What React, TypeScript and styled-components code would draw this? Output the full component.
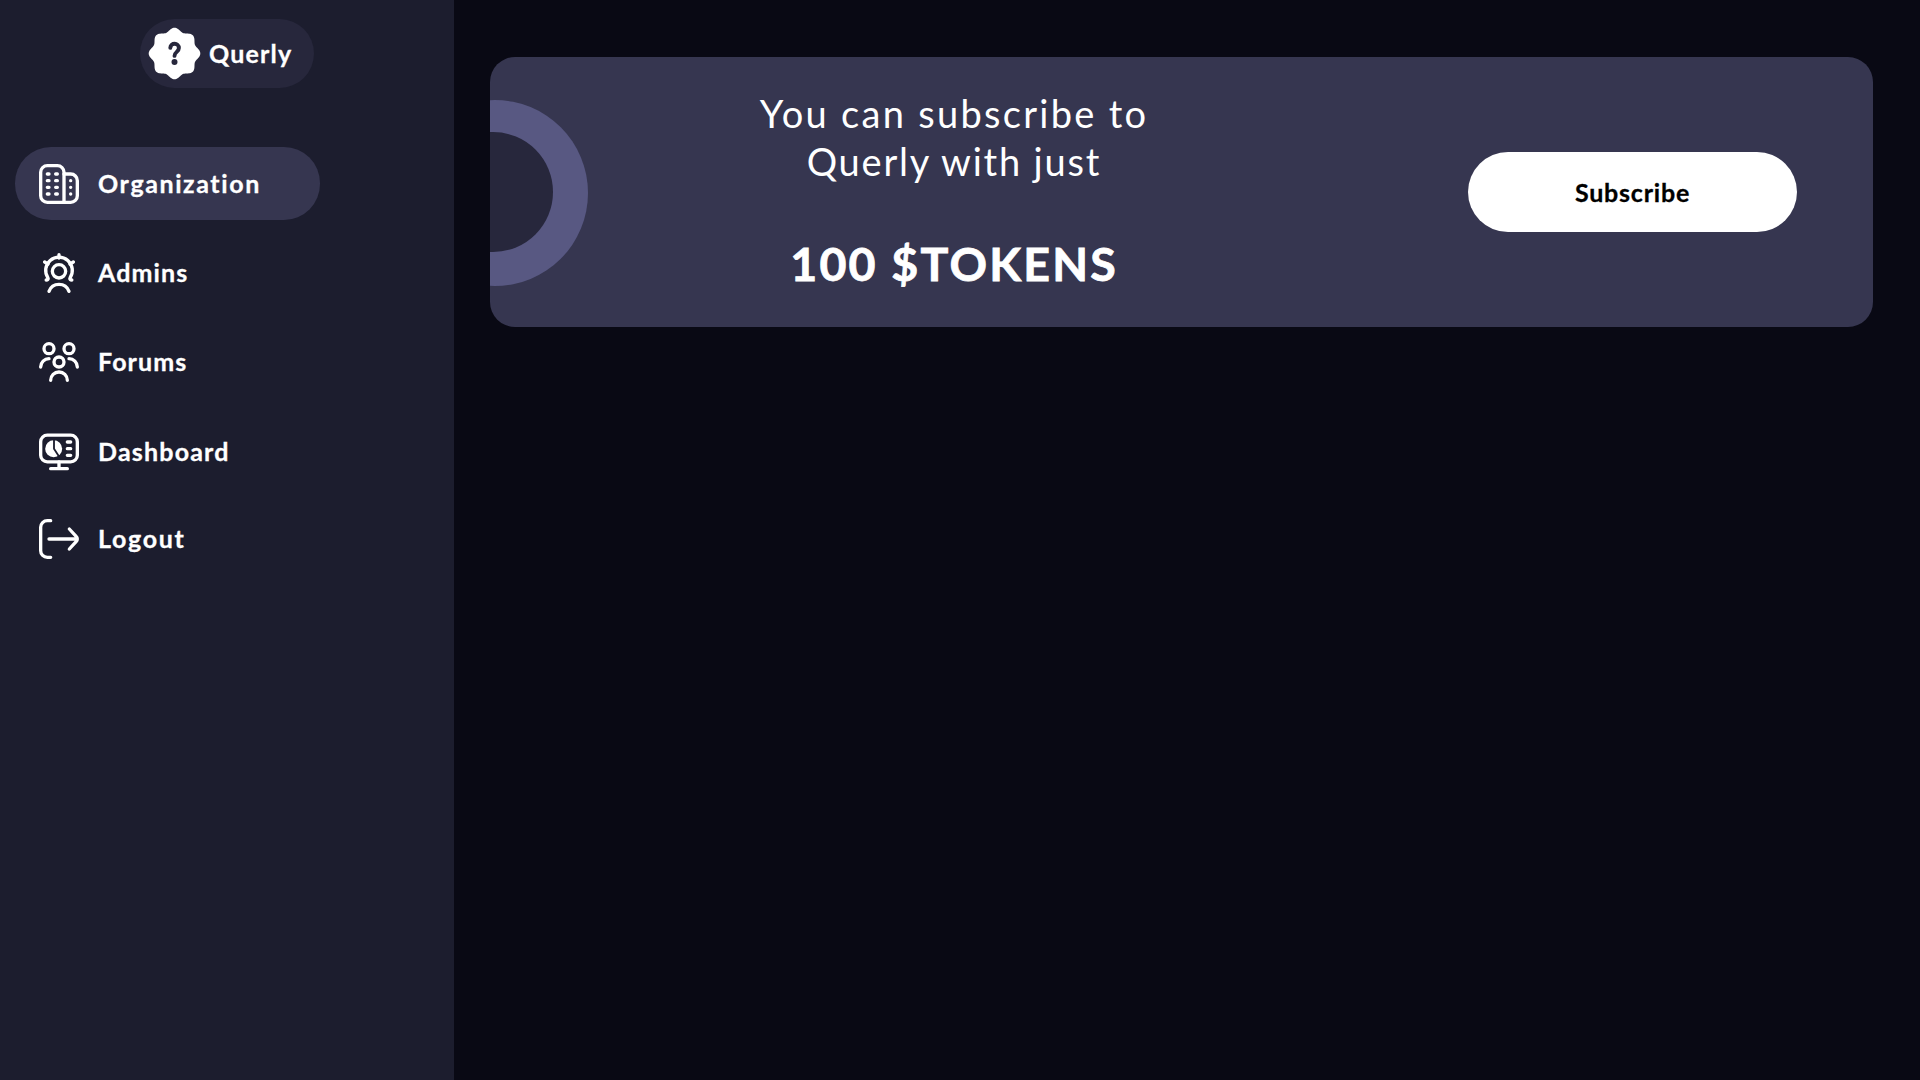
import React from "react";
import styled, { createGlobalStyle } from "styled-components";

const GlobalStyle = createGlobalStyle`
  *, *::before, *::after { box-sizing: border-box; }
  body {
    margin: 0;
    background: #090914;
    color: #ffffff;
    font-family: Lato, "Open Sans", sans-serif;
    font-variant-ligatures: none;
  }
`;

const Page = styled.div`
  display: flex;
  min-height: 100vh;
`;

const Sidebar = styled.aside`
  width: 454px;
  flex: none;
  display: flex;
  flex-direction: column;
  align-items: flex-start;
  padding: 19px 15px;
  background: #1c1d2e;
`;

const Brand = styled.div`
  display: flex;
  align-items: center;
  gap: 8px;
  width: 174px;
  height: 69px;
  margin-left: 125px;
  padding-left: 8px;
  border-radius: 35px;
  background: #27273c;
`;

const BrandMark = styled.svg`
  width: 53px;
  height: 53px;
  flex: none;
`;

const Label = styled.span<{ $tracking: number }>`
  padding-bottom: 2px;
  font-size: 25px;
  line-height: 30px;
  font-weight: 700;
  letter-spacing: ${(p) => p.$tracking}px;
  white-space: nowrap;
  -webkit-text-stroke: 0.3px currentColor;
`;

const Nav = styled.nav`
  display: flex;
  flex-direction: column;
  gap: 16px;
  margin-top: 59px;
`;

const NavItem = styled.a<{ $active?: boolean; $height: number }>`
  display: flex;
  align-items: center;
  gap: 19px;
  width: 305px;
  height: ${(p) => p.$height}px;
  padding-left: 24px;
  border-radius: 36px;
  background: ${(p) => (p.$active ? "#363650" : "transparent")};
`;

const Glyph = styled.svg`
  width: 40px;
  height: 40px;
  flex: none;
  overflow: visible;
  fill: none;
  stroke: #ffffff;
  stroke-width: 2;
  stroke-linecap: round;
  stroke-linejoin: round;
`;

const Main = styled.main`
  flex: 1;
  padding: 57px 47px 0 36px;
`;

const Banner = styled.section`
  display: flex;
  align-items: center;
  height: 270px;
  padding-top: 2px;
  overflow: hidden;
  border-radius: 25px;
  background: #363650;
`;

const Ring = styled.div`
  flex: none;
  width: 186px;
  height: 186px;
  margin-left: -88px;
  padding: 32px 35px 34px 31px;
  border-radius: 50%;
  background: #585882;
`;

const RingCore = styled.div`
  height: 120px;
  border-radius: 50%;
  background: #27273c;
`;

const Offer = styled.div`
  width: 500px;
  margin: 0 0 4px 115px;
  text-align: center;
`;

const OfferLine = styled.div<{ $tracking: number }>`
  font-size: 38px;
  line-height: 48px;
  letter-spacing: ${(p) => p.$tracking}px;
  margin-right: -${(p) => p.$tracking}px;
`;

const Price = styled.div`
  margin: 48px -2.2px 0 0;
  font-size: 46.5px;
  line-height: 60px;
  font-weight: 700;
  letter-spacing: 2.2px;
  -webkit-text-stroke: 0.8px currentColor;
`;

const SubscribeButton = styled.button`
  display: flex;
  align-items: center;
  justify-content: center;
  width: 329px;
  height: 80px;
  margin: 0 76px 2px auto;
  padding: 2px 0 0;
  border: 0;
  border-radius: 40px;
  background: #ffffff;
  color: #000000;
  font-family: inherit;
`;

/* Eight-lobed rosette around the centre of a 53px box. */
const rosette =
  Array.from({ length: 180 }, (_, i) => {
    const t = (i / 180) * Math.PI * 2;
    const r = 24 + 1.8 * Math.cos(8 * t);
    const x = (26.5 + r * Math.cos(t)).toFixed(2);
    const y = (26.5 + r * Math.sin(t)).toFixed(2);
    return `${i ? "L" : "M"}${x} ${y}`;
  }).join("") + "Z";

const OrganizationIcon = () => (
  <Glyph viewBox="0 0 24 24">
    <path d="M5 1h6a4 4 0 0 1 4 4v18H5a4 4 0 0 1-4-4V5a4 4 0 0 1 4-4Z" />
    <path d="M15 6h4a4 4 0 0 1 4 4v9a4 4 0 0 1-4 4h-4" />
    <path d="M5 6h1M5 10h1M5 14h1M5 18h1M10 6h1M10 10h1M10 14h1M10 18h1M19 10h.01M19 14h.01M19 18h.01" />
  </Glyph>
);

const AdminsIcon = () => (
  <Glyph viewBox="0 0 24 24">
    <circle cx="12" cy="11" r="4" />
    <path d="M4.3 16.2c.8 0 1.5-.5 1.1-1.2A8 8 0 1 1 18.6 15c-.4.7.3 1.2 1.1 1.2" />
    <path d="M12 3V1M5.4 6.7 3.4 5.4M18.6 6.7l2-1.3" />
    <path d="M6 23a6.4 6.4 0 0 1 12 0" />
  </Glyph>
);

const ForumsIcon = () => (
  <Glyph viewBox="0 0 24 24">
    <circle cx="6" cy="4" r="3" />
    <circle cx="18" cy="4" r="3" />
    <circle cx="12" cy="12" r="3" />
    <path d="M1 15a5 5 0 0 1 5-5M23 15a5 5 0 0 0-5-5M7 23a5 5 0 0 1 10 0" />
  </Glyph>
);

const DashboardIcon = () => (
  <Glyph viewBox="0 0 24 24">
    <rect x="1" y="1.9" width="22" height="16" rx="4" />
    <path d="M12 17.9V22M7 22h10M17 6h2M17 10h2M17 14h2" />
    <circle cx="8.8" cy="10" r="5.1" fill="#ffffff" stroke="none" />
    <path d="M9 4.6v5.5l3 4.6" stroke="#1c1d2e" strokeWidth="1.1" strokeLinecap="butt" />
  </Glyph>
);

const LogoutIcon = () => (
  <Glyph viewBox="0 0 24 24">
    <path d="M7 1H5a4 4 0 0 0-4 4v14a4 4 0 0 0 4 4h2" />
    <path d="M6 12h16.4M18.2 6l4.2 4.6a2 2 0 0 1 0 2.8L18.2 18" />
  </Glyph>
);

const items = [
  { label: "Organization", tracking: 1.6, height: 73, icon: <OrganizationIcon />, active: true },
  { label: "Admins", tracking: 1.1, height: 73, icon: <AdminsIcon /> },
  { label: "Forums", tracking: 1.1, height: 74, icon: <ForumsIcon /> },
  { label: "Dashboard", tracking: 1.2, height: 73, icon: <DashboardIcon /> },
  { label: "Logout", tracking: 1.7, height: 70, icon: <LogoutIcon /> },
];

export default function App() {
  return (
    <Page>
      <GlobalStyle />
      <Sidebar>
        <Brand>
          <BrandMark viewBox="0 0 53 53">
            <path d={rosette} fill="#ffffff" />
            <path
              d="M22.3 20.9c.2-5.4 8.6-5.6 8.6.2 0 3.8-4.4 3.8-4.4 7.8"
              fill="none"
              stroke="#27273c"
              strokeWidth="3.9"
              strokeLinecap="round"
            />
            <circle cx="26.5" cy="35" r="3" fill="#27273c" />
          </BrandMark>
          <Label $tracking={1.2}>Querly</Label>
        </Brand>
        <Nav>
          {items.map((item) => (
            <NavItem key={item.label} $active={item.active} $height={item.height}>
              {item.icon}
              <Label $tracking={item.tracking}>{item.label}</Label>
            </NavItem>
          ))}
        </Nav>
      </Sidebar>
      <Main>
        <Banner>
          <Ring>
            <RingCore />
          </Ring>
          <Offer>
            <OfferLine $tracking={2.3}>You can subscribe to</OfferLine>
            <OfferLine $tracking={1.8}>Querly with just</OfferLine>
            <Price>100 $TOKENS</Price>
          </Offer>
          <SubscribeButton>
            <Label $tracking={0.8}>Subscribe</Label>
          </SubscribeButton>
        </Banner>
      </Main>
    </Page>
  );
}
